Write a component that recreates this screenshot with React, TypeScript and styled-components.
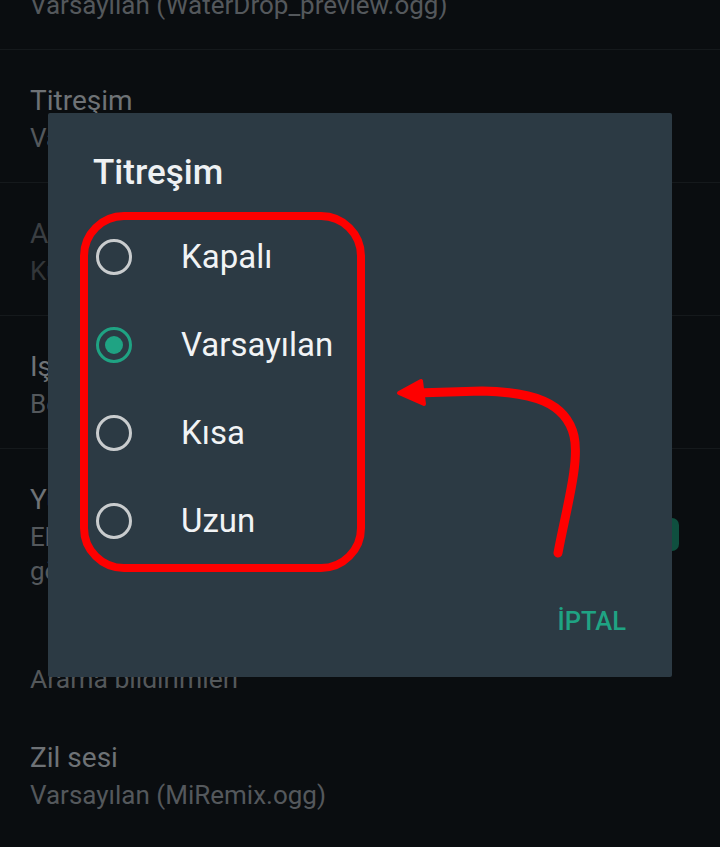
import React from 'react'
import styled, { createGlobalStyle } from 'styled-components'

const GlobalStyle = createGlobalStyle`
  html, body {
    margin: 0;
    padding: 0;
    background: #0a0d10;
  }
  body {
    font-family: Roboto, 'Noto Sans', sans-serif;
  }
`

const OPTIONS = ['Kapalı', 'Varsayılan', 'Kısa', 'Uzun']

const Screen = styled.div`
  position: relative;
  width: 720px;
  height: 847px;
  overflow: hidden;
  background: #0a0d10;
`

const SettingsList = styled.div`
  margin-top: -83px;
  display: flex;
  flex-direction: column;
`

const Item = styled.div<{ $divider?: boolean }>`
  display: flex;
  align-items: center;
  padding: 32px 41px 27px 30px;
  border-bottom: ${(p) => (p.$divider ? '1px solid #15191c' : 'none')};
`

const ItemText = styled.div`
  flex: 1;
  display: flex;
  flex-direction: column;
`

const ItemTitle = styled.div<{ $disabled?: boolean }>`
  font-size: 28px;
  line-height: 38px;
  color: ${(p) => (p.$disabled ? '#3a3e42' : '#6e7276')};
`

const ItemSubtitle = styled.div<{ $disabled?: boolean }>`
  margin-top: 1px;
  font-size: 26px;
  line-height: 34px;
  color: ${(p) => (p.$disabled ? '#323639' : '#54585c')};
  padding-right: 60px;
`

const SectionHeader = styled.div`
  padding: 47px 30px 11px;
  font-size: 26.5px;
  line-height: 34px;
  color: #54585b;
`

const Switch = styled.div`
  width: 56px;
  height: 33px;
  border-radius: 7px;
  background: #0f4f3f;
  flex-shrink: 0;
`

const Dialog = styled.div`
  position: absolute;
  left: 48px;
  top: 113px;
  width: 624px;
  height: 564px;
  box-sizing: border-box;
  background: #2c3a44;
  border-radius: 2px;
  padding: 39px 46px 32px 48px;
  display: flex;
  flex-direction: column;
`

const DialogTitle = styled.div`
  font-size: 35px;
  line-height: 42px;
  font-weight: 500;
  color: #eef1f3;
  margin-left: -3px;
`

const OptionList = styled.div`
  margin-top: 19px;
  display: flex;
  flex-direction: column;
`

const Option = styled.div`
  height: 88px;
  display: flex;
  align-items: center;
  gap: 49px;
`

const Radio = styled.div<{ $checked?: boolean }>`
  width: 36px;
  height: 36px;
  box-sizing: border-box;
  border-radius: 50%;
  border: 3px solid ${(p) => (p.$checked ? '#1fa383' : '#c9ccce')};
  display: flex;
  align-items: center;
  justify-content: center;
  &::after {
    content: '';
    display: ${(p) => (p.$checked ? 'block' : 'none')};
    width: 18px;
    height: 18px;
    border-radius: 50%;
    background: #1fa383;
  }
`

const OptionLabel = styled.div`
  font-size: 33px;
  line-height: 40px;
  color: #f1f3f5;
`

const Actions = styled.div`
  margin-top: auto;
  display: flex;
  justify-content: flex-end;
`

const TextButton = styled.div`
  height: 48px;
  display: flex;
  align-items: center;
  font-size: 25.5px;
  font-weight: 500;
  color: #1fa383;
`

const Annotation = styled.svg`
  position: absolute;
  left: 0;
  top: 0;
  pointer-events: none;
`

export default function App() {
  const selected = 'Varsayılan'
  return (
    <>
      <GlobalStyle />
      <Screen>
        <SettingsList>
          <Item $divider>
            <ItemText>
              <ItemTitle>Bildirim sesi</ItemTitle>
              <ItemSubtitle>Varsayılan (WaterDrop_preview.ogg)</ItemSubtitle>
            </ItemText>
          </Item>
          <Item $divider>
            <ItemText>
              <ItemTitle>Titreşim</ItemTitle>
              <ItemSubtitle>Varsayılan</ItemSubtitle>
            </ItemText>
          </Item>
          <Item $divider>
            <ItemText>
              <ItemTitle $disabled>Açılır bildirim</ItemTitle>
              <ItemSubtitle $disabled>Kullanılamıyor</ItemSubtitle>
            </ItemText>
          </Item>
          <Item $divider>
            <ItemText>
              <ItemTitle>Işık</ItemTitle>
              <ItemSubtitle>Beyaz</ItemSubtitle>
            </ItemText>
          </Item>
          <Item>
            <ItemText>
              <ItemTitle>Yüksek öncelikli bildirimleri kullan</ItemTitle>
              <ItemSubtitle>Ekranın üst kısmında bildirim önizlemelerini göster</ItemSubtitle>
            </ItemText>
            <Switch />
          </Item>
          <SectionHeader>Arama bildirimleri</SectionHeader>
          <Item>
            <ItemText>
              <ItemTitle>Zil sesi</ItemTitle>
              <ItemSubtitle>Varsayılan (MiRemix.ogg)</ItemSubtitle>
            </ItemText>
          </Item>
        </SettingsList>

        <Dialog>
          <DialogTitle>Titreşim</DialogTitle>
          <OptionList>
            {OPTIONS.map((o) => (
              <Option key={o}>
                <Radio $checked={o === selected} />
                <OptionLabel>{o}</OptionLabel>
              </Option>
            ))}
          </OptionList>
          <Actions>
            <TextButton>İPTAL</TextButton>
          </Actions>
        </Dialog>

        {/* red hand-drawn markup on top of the screenshot */}
        <Annotation width="720" height="847" viewBox="0 0 720 847">
          <rect x="84" y="216" width="277" height="352" rx="40" fill="none" stroke="#fe0000" strokeWidth="8" />
          <path
            d="M558 553 C566 510 580 462 574 436 C566 402 532 392 482 391 L416 393"
            fill="none"
            stroke="#fe0000"
            strokeWidth="9"
            strokeLinecap="round"
          />
          <polygon
            points="399,393 421,381 424,404"
            fill="#fe0000"
            stroke="#fe0000"
            strokeWidth="4"
            strokeLinejoin="round"
          />
        </Annotation>
      </Screen>
    </>
  )
}
